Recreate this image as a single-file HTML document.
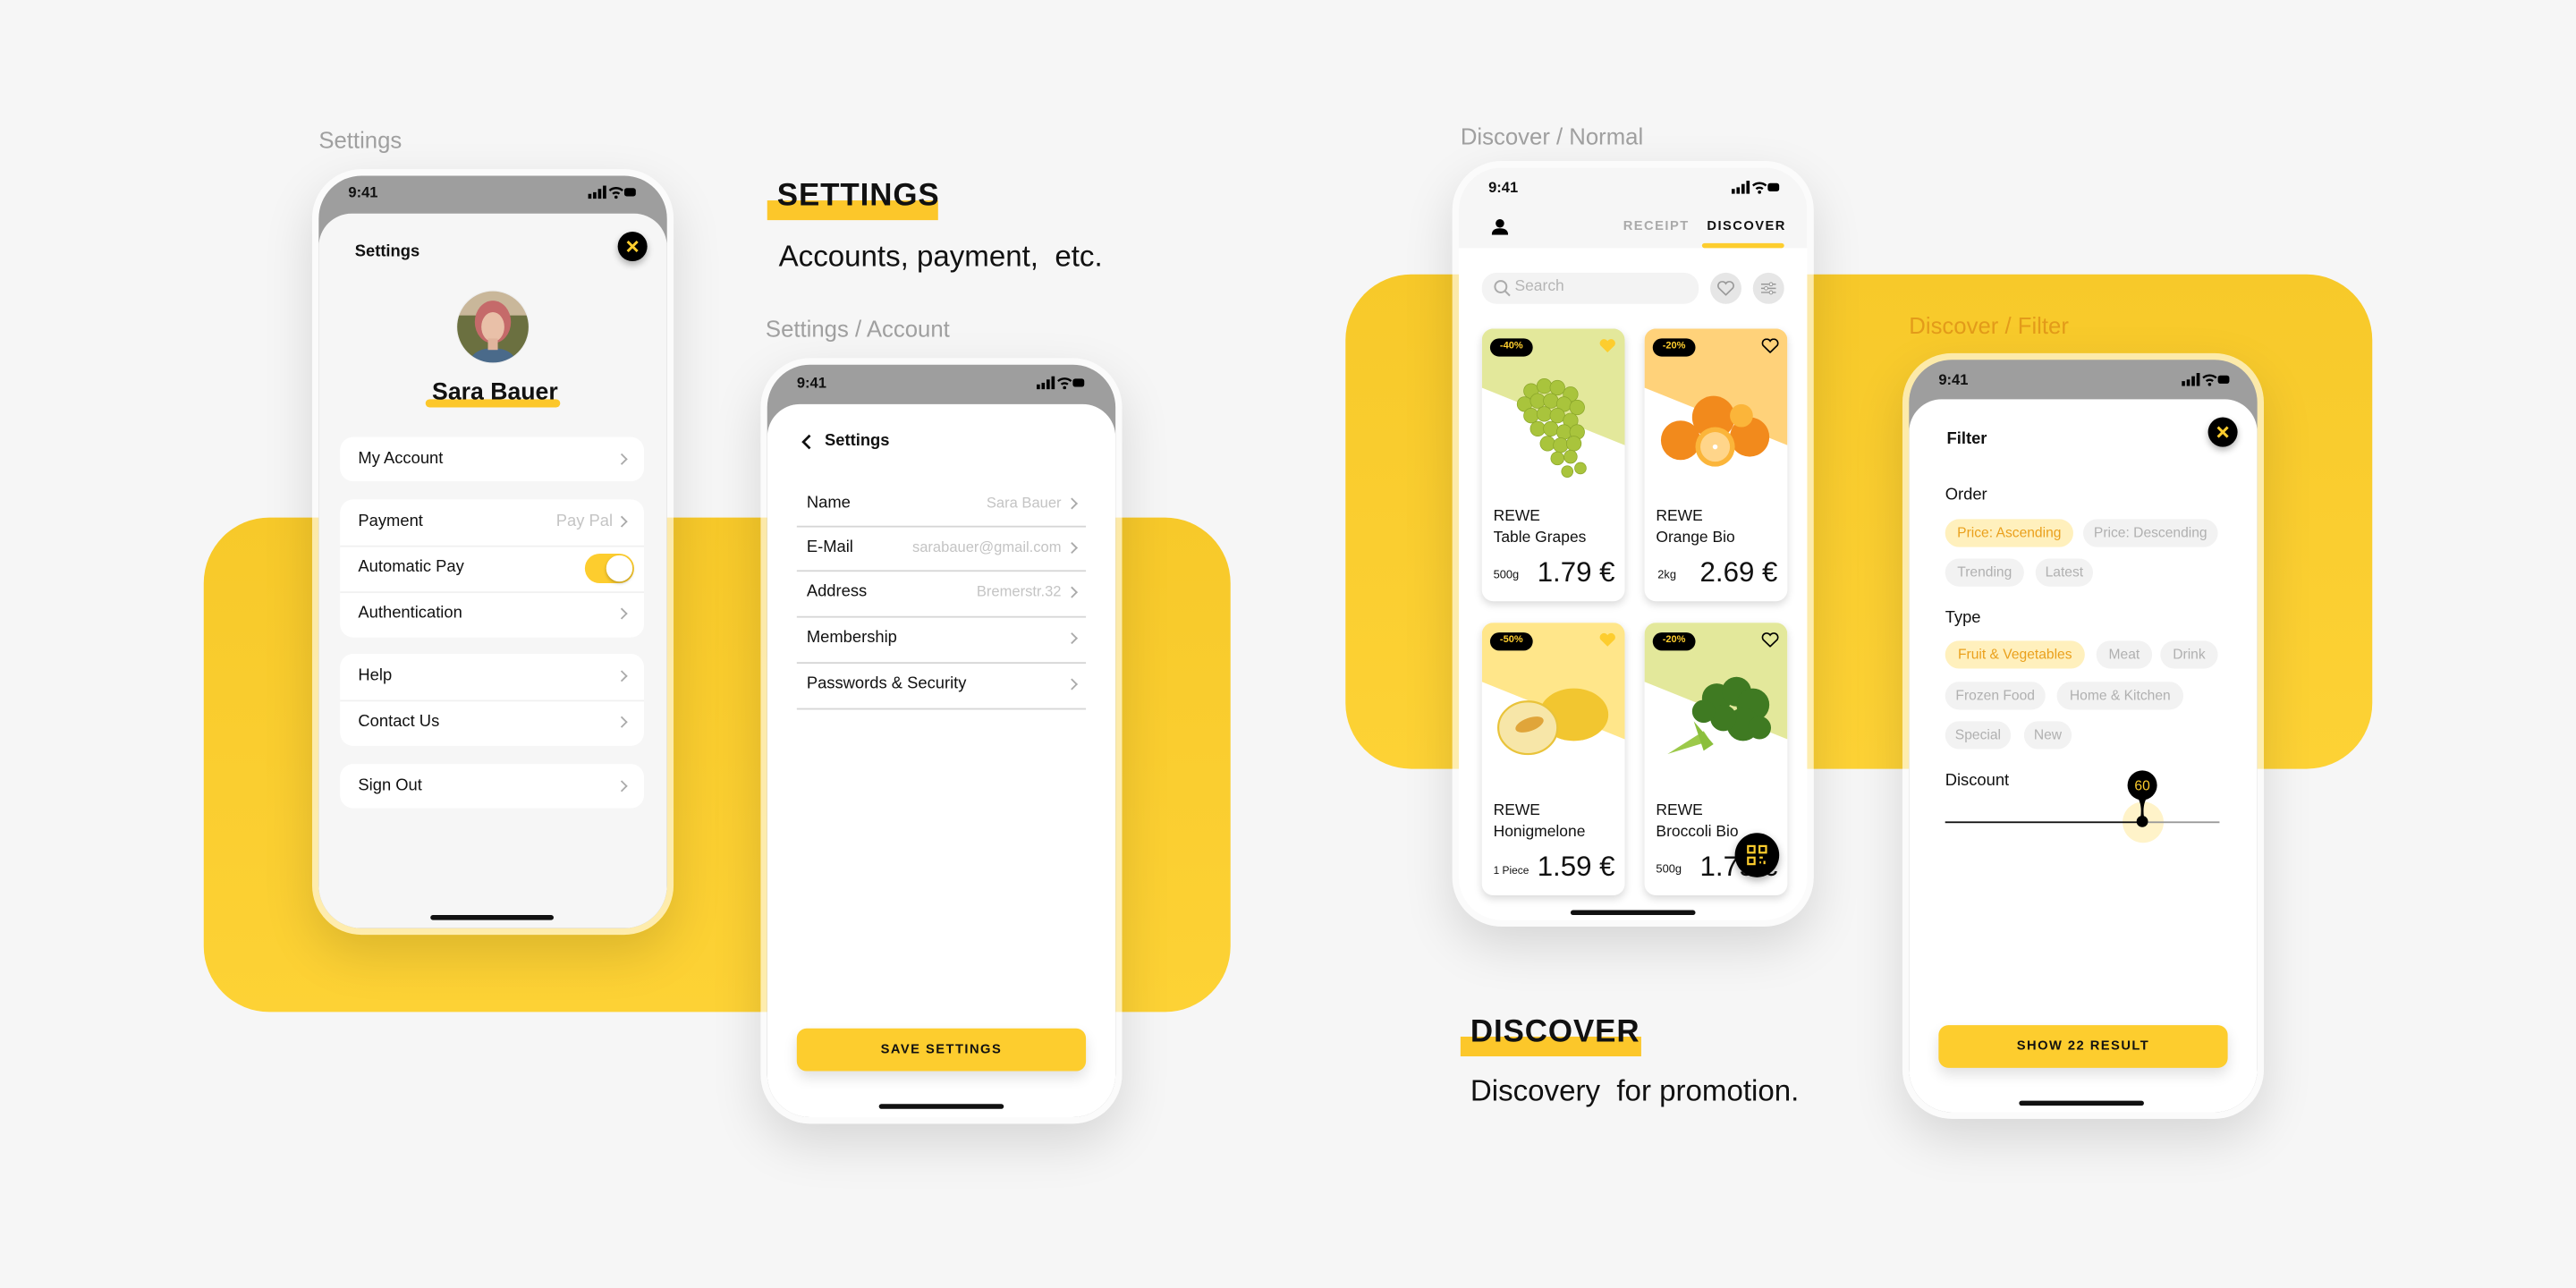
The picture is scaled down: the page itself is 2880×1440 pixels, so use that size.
<!DOCTYPE html>
<html><head><meta charset="utf-8"><style>
*{margin:0;padding:0;box-sizing:border-box}
html,body{width:2880px;height:1440px;overflow:hidden;background:#f6f6f6}
#w{position:absolute;left:0;top:0;width:1568px;height:784px;transform:scale(1.836735);transform-origin:0 0;font-family:"Liberation Sans",sans-serif;color:#111}
#w div,#w span,#w svg{position:absolute}
.lbl{font-size:14px;color:#a0a0a0;white-space:nowrap}
.yb{background:linear-gradient(180deg,#f7c92a,#fdd235);border-radius:40px}
.ph{width:220px;height:466px;border-radius:30px;background:rgba(255,255,255,.6);box-shadow:0 12px 30px rgba(0,0,0,.13)}
.sc{left:4px;top:4px;right:4px;bottom:4px;border-radius:26px;overflow:hidden;background:#9e9e9e}
.sheet{left:0;right:0;bottom:0;border-radius:20px 20px 0 0}
.t{white-space:nowrap;font-size:10px}
.b{font-weight:bold}
.st{font-size:9px;font-weight:bold}
.card{background:#fff;border-radius:8px}
.chev{width:5px;height:5px;border-right:1px solid #aaa;border-top:1px solid #aaa;transform:rotate(45deg)}
.hi{height:5px;background:#fcc72a;border-radius:3px}
.sep{height:1px;background:#d6d6d6}
.chip{height:17px;border-radius:9px;background:#f2f2f2;color:#b0b0b0;font-size:8.5px;line-height:17px;text-align:center;white-space:nowrap}
.chip.on{background:#fff0bd;color:#eaa01c}
.btn{background:#fdcd2e;border-radius:6px;box-shadow:0 4px 8px rgba(0,0,0,.12);font-size:8px;font-weight:bold;letter-spacing:.8px;text-align:center;line-height:26px}
.home{height:3px;background:#111;border-radius:2px}
.x{width:18px;height:18px;border-radius:50%;background:#000;box-shadow:0 2px 4px rgba(0,0,0,.3)}
.pc{width:87px;height:166px;border-radius:7px;overflow:hidden;background:#fff;box-shadow:0 2px 5px rgba(0,0,0,.15)}
.badge{left:5px;top:6px;width:26px;height:11px;border-radius:6px;background:#000;color:#fdcd2e;font-size:6px;font-weight:bold;text-align:center;line-height:11px}
</style></head><body><div id="w">

<div class="yb" style="left:124px;top:315px;width:625px;height:301px"></div>
<div class="yb" style="left:819px;top:167px;width:625px;height:301px"></div>

<div class="lbl" style="left:194px;top:77px">Settings</div>
<div class="lbl" style="left:466px;top:192px">Settings / Account</div>
<div class="lbl" style="left:889px;top:75px">Discover / Normal</div>
<div class="lbl" style="left:1162px;top:190px;color:#e39b1a">Discover / Filter</div>

<div style="left:467px;top:122px;width:104px;height:12px;background:#fcc72a"></div>
<div class="b" style="left:473px;top:109px;font-size:19px;letter-spacing:.5px">SETTINGS</div>
<div style="left:474px;top:146px;font-size:18px;white-space:pre">Accounts, payment,  etc.</div>
<div style="left:889px;top:631px;width:110px;height:12px;background:#fcc72a"></div>
<div class="b" style="left:895px;top:618px;font-size:19px;letter-spacing:.5px">DISCOVER</div>
<div style="left:895px;top:654px;font-size:18px;white-space:pre">Discovery  for promotion.</div>

<!-- PHONE 1 -->
<div class="ph" style="left:190px;top:103px"><div class="sc"><div class="sheet" style="top:23px;background:#f6f6f6"></div></div></div>
<div class="st" style="left:212px;top:112px">9:41</div>
<svg style="left:358px;top:113px" width="30" height="8" viewBox="0 0 30 8"><rect x="0" y="5" width="2" height="3"/><rect x="3" y="4" width="2" height="4"/><rect x="6" y="2" width="2" height="6"/><rect x="9" y="0" width="2" height="8"/><path d="M13 3a6 6 0 0 1 8 0M15 5a3 3 0 0 1 4 0" stroke="#000" fill="none" stroke-width="1.3"/><circle cx="17" cy="7" r="1"/><rect x="22" y="1.5" width="7" height="5" rx="1.5"/></svg>
<div class="t b" style="left:216px;top:148px">Settings</div>
<div class="x" style="left:376px;top:141px"></div>
<svg style="left:376px;top:141px" width="18" height="18"><path d="M6 6l6 6M12 6l-6 6" stroke="#fdcd2e" stroke-width="1.6"/></svg>
<svg style="left:277px;top:176px" width="46" height="46" viewBox="0 0 46 46"><defs><clipPath id="cc"><circle cx="23" cy="23" r="22"/></clipPath></defs><g clip-path="url(#cc)"><rect width="46" height="46" fill="#6b7040"/><rect y="0" width="46" height="16" fill="#c9b79a"/><path d="M8 46c2-8 8-10 15-10s13 2 15 10z" fill="#4a6a8a"/><ellipse cx="23" cy="20" rx="11" ry="13" fill="#c56a6a"/><ellipse cx="23" cy="23" rx="7" ry="9" fill="#e9c0a8"/><rect x="20" y="30" width="6" height="7" fill="#e0b49c"/></g><circle cx="23" cy="23" r="22" fill="none" stroke="#eee" stroke-width=".6"/></svg>
<div class="hi" style="left:259px;top:243px;width:82px"></div>
<div class="b" style="left:263px;top:231px;font-size:14.5px">Sara Bauer</div>
<div class="card" style="left:207px;top:266px;width:185px;height:27px"></div>
<div class="card" style="left:207px;top:304px;width:185px;height:84px"></div>
<div class="card" style="left:207px;top:398px;width:185px;height:56px"></div>
<div class="card" style="left:207px;top:465px;width:185px;height:27px"></div>
<div style="left:207px;top:332px;width:185px;height:1px;background:#f1f1f1"></div>
<div style="left:207px;top:360px;width:185px;height:1px;background:#f1f1f1"></div>
<div style="left:207px;top:426px;width:185px;height:1px;background:#f1f1f1"></div>
<div class="t" style="left:218px;top:274px">My Account</div>
<div class="t" style="left:218px;top:312px">Payment</div>
<div class="t" style="right:1195px;top:312px;color:#c4c4c4">Pay Pal</div>
<div class="t" style="left:218px;top:340px">Automatic Pay</div>
<div class="t" style="left:218px;top:368px">Authentication</div>
<div class="t" style="left:218px;top:406px">Help</div>
<div class="t" style="left:218px;top:434px">Contact Us</div>
<div class="t" style="left:218px;top:473px">Sign Out</div>
<div class="chev" style="left:376px;top:277px"></div>
<div class="chev" style="left:376px;top:315px"></div>
<div class="chev" style="left:376px;top:371px"></div>
<div class="chev" style="left:376px;top:409px"></div>
<div class="chev" style="left:376px;top:437px"></div>
<div class="chev" style="left:376px;top:476px"></div>
<div style="left:356px;top:337px;width:30px;height:18px;border-radius:9px;background:#fdcd2e"></div>
<div style="left:369px;top:338px;width:16px;height:16px;border-radius:50%;background:#fff;box-shadow:0 1px 2px rgba(0,0,0,.25)"></div>
<div class="home" style="left:262px;top:557px;width:75px"></div>

<!-- PHONE 2 -->
<div class="ph" style="left:463px;top:218px"><div class="sc"><div class="sheet" style="top:24px;background:#fff"></div></div></div>
<div class="st" style="left:485px;top:228px">9:41</div>
<svg style="left:631px;top:229px" width="30" height="8" viewBox="0 0 30 8"><rect x="0" y="5" width="2" height="3"/><rect x="3" y="4" width="2" height="4"/><rect x="6" y="2" width="2" height="6"/><rect x="9" y="0" width="2" height="8"/><path d="M13 3a6 6 0 0 1 8 0M15 5a3 3 0 0 1 4 0" stroke="#000" fill="none" stroke-width="1.3"/><circle cx="17" cy="7" r="1"/><rect x="22" y="1.5" width="7" height="5" rx="1.5"/></svg>
<svg style="left:487px;top:264px" width="8" height="10"><path d="M6 1L2 5l4 4" stroke="#111" stroke-width="1.5" fill="none"/></svg>
<div class="t b" style="left:502px;top:263px">Settings</div>
<div class="t" style="left:491px;top:301px">Name</div>
<div class="t" style="left:491px;top:328px">E-Mail</div>
<div class="t" style="left:491px;top:355px">Address</div>
<div class="t" style="left:491px;top:383px">Membership</div>
<div class="t" style="left:491px;top:411px">Passwords &amp; Security</div>
<div class="t" style="right:922px;top:301px;color:#c4c4c4;font-size:9px">Sara Bauer</div>
<div class="t" style="right:922px;top:328px;color:#c4c4c4;font-size:9px">sarabauer@gmail.com</div>
<div class="t" style="right:922px;top:355px;color:#c4c4c4;font-size:9px">Bremerstr.32</div>
<div class="chev" style="left:650px;top:304px"></div>
<div class="chev" style="left:650px;top:331px"></div>
<div class="chev" style="left:650px;top:358px"></div>
<div class="chev" style="left:650px;top:386px"></div>
<div class="chev" style="left:650px;top:414px"></div>
<div class="sep" style="left:485px;top:320px;width:176px"></div>
<div class="sep" style="left:485px;top:347px;width:176px"></div>
<div class="sep" style="left:485px;top:375px;width:176px"></div>
<div class="sep" style="left:485px;top:403px;width:176px"></div>
<div class="sep" style="left:485px;top:431px;width:176px"></div>
<div class="btn" style="left:485px;top:626px;width:176px;height:26px">SAVE SETTINGS</div>
<div class="home" style="left:535px;top:672px;width:76px"></div>

<!-- PHONE 3 -->
<div class="ph" style="left:884px;top:98px"><div class="sc" style="background:#fff"><div style="left:0;top:0;right:0;height:49px;background:#f6f6f6"></div></div></div>
<div class="st" style="left:906px;top:109px">9:41</div>
<svg style="left:1054px;top:110px" width="30" height="8" viewBox="0 0 30 8"><rect x="0" y="5" width="2" height="3"/><rect x="3" y="4" width="2" height="4"/><rect x="6" y="2" width="2" height="6"/><rect x="9" y="0" width="2" height="8"/><path d="M13 3a6 6 0 0 1 8 0M15 5a3 3 0 0 1 4 0" stroke="#000" fill="none" stroke-width="1.3"/><circle cx="17" cy="7" r="1"/><rect x="22" y="1.5" width="7" height="5" rx="1.5"/></svg>
<svg style="left:908px;top:133px" width="10" height="10"><circle cx="5" cy="3" r="2.6"/><path d="M0 10c0-3 2-4 5-4s5 1 5 4z"/></svg>
<div style="left:988px;top:133px;font-size:8px;letter-spacing:.8px;color:#aaa;font-weight:bold">RECEIPT</div>
<div style="left:1039px;top:133px;font-size:8px;letter-spacing:.8px;font-weight:bold">DISCOVER</div>
<div style="left:1036px;top:148px;width:50px;height:3px;background:#fdcd2e;border-radius:2px"></div>
<div style="left:902px;top:166px;width:132px;height:19px;border-radius:9px;background:#f3f3f3"></div>
<svg style="left:909px;top:170px" width="11" height="11"><circle cx="4.5" cy="4.5" r="3.5" stroke="#aaa" fill="none" stroke-width="1.1"/><path d="M7 7l3 3" stroke="#aaa" stroke-width="1.1"/></svg>
<div style="left:922px;top:169px;font-size:9.5px;color:#b5b5b5">Search</div>
<div style="left:1041px;top:166px;width:19px;height:19px;border-radius:50%;background:#e6e6e6"></div>
<div style="left:1067px;top:166px;width:19px;height:19px;border-radius:50%;background:#e6e6e6"></div>
<svg style="left:1045px;top:171px" width="11" height="9" viewBox="0 0 11 9"><path d="M5.5 8.5L1.2 4.3A2.3 2.3 0 0 1 5.5 1.6a2.3 2.3 0 0 1 4.3 2.7z" fill="none" stroke="#999" stroke-width=".9"/></svg>
<svg style="left:1071px;top:171px" width="11" height="9"><path d="M1 2h9M1 4.5h9M1 7h9" stroke="#999" stroke-width=".8"/><circle cx="7" cy="2" r="1" fill="#fff" stroke="#999" stroke-width=".6"/><circle cx="4" cy="4.5" r="1" fill="#fff" stroke="#999" stroke-width=".6"/><circle cx="7" cy="7" r="1" fill="#fff" stroke="#999" stroke-width=".6"/></svg>

<div class="pc" style="left:902px;top:200px">
 <svg style="left:0;top:0" width="87" height="100"><path d="M0 0H87V71L0 36z" fill="#e3e89b"/>
 <g fill="#a9c43c" stroke="#8aa62a" stroke-width=".4"><circle cx="30" cy="38" r="4.5"/><circle cx="38" cy="35" r="4.5"/><circle cx="46" cy="36" r="4.5"/><circle cx="54" cy="40" r="4.5"/><circle cx="26" cy="46" r="4.5"/><circle cx="34" cy="44" r="4.5"/><circle cx="42" cy="44" r="4.5"/><circle cx="50" cy="46" r="4.5"/><circle cx="58" cy="48" r="4.5"/><circle cx="30" cy="53" r="4.5"/><circle cx="38" cy="52" r="4.5"/><circle cx="46" cy="53" r="4.5"/><circle cx="54" cy="56" r="4.5"/><circle cx="34" cy="61" r="4.5"/><circle cx="42" cy="61" r="4.5"/><circle cx="50" cy="63" r="4.5"/><circle cx="58" cy="63" r="4.5"/><circle cx="40" cy="70" r="4.5"/><circle cx="48" cy="71" r="4.5"/><circle cx="56" cy="70" r="4.5"/><circle cx="46" cy="79" r="4"/><circle cx="54" cy="78" r="4"/><circle cx="60" cy="85" r="3.5"/><circle cx="52" cy="87" r="3.5"/></g></svg>
 <div class="badge">-40%</div>
 <svg style="left:71px;top:6px" width="11" height="9" viewBox="0 0 11 9"><path d="M5.5 8.5L1.2 4.3A2.3 2.3 0 0 1 5.5 1.6a2.3 2.3 0 0 1 4.3 2.7z" fill="#fdcd2e"/></svg>
 <div style="left:7px;top:108px;font-size:9.5px;line-height:13px">REWE<br>Table Grapes</div>
 <div style="left:7px;top:147px;font-size:7px">500g</div>
 <div style="right:6px;top:139px;font-size:17px">1.79 €</div>
</div>
<div class="pc" style="left:1001px;top:200px">
 <svg style="left:0;top:0" width="87" height="90"><path d="M0 0H87V71L0 36z" fill="#ffd27a"/>
 <circle cx="42" cy="54" r="13" fill="#f28a1c"/><circle cx="22" cy="68" r="12" fill="#f28a1c"/><circle cx="64" cy="66" r="12" fill="#f28a1c"/><circle cx="59" cy="53" r="7" fill="#fbb53a"/><circle cx="43" cy="72" r="12" fill="#fbb53a"/><circle cx="43" cy="72" r="9" fill="#ffd58a"/><circle cx="43" cy="72" r="1.5" fill="#fff"/></svg>
 <div class="badge">-20%</div>
 <svg style="left:71px;top:6px" width="11" height="9" viewBox="0 0 11 9"><path d="M5.5 8.5L1.2 4.3A2.3 2.3 0 0 1 5.5 1.6a2.3 2.3 0 0 1 4.3 2.7z" fill="none" stroke="#000" stroke-width=".9"/></svg>
 <div style="left:7px;top:108px;font-size:9.5px;line-height:13px">REWE<br>Orange Bio</div>
 <div style="left:8px;top:147px;font-size:7px">2kg</div>
 <div style="right:6px;top:139px;font-size:17px">2.69 €</div>
</div>
<div class="pc" style="left:902px;top:379px">
 <svg style="left:0;top:0" width="87" height="90"><path d="M0 0H87V71L0 36z" fill="#ffe68a"/>
 <ellipse cx="56" cy="56" rx="21" ry="16" fill="#f2c630"/><ellipse cx="28" cy="64" rx="18" ry="16" fill="#f7e6a8" stroke="#e9c33a" stroke-width="1.2"/><ellipse cx="29" cy="62" rx="9" ry="4" fill="#e0a53a" transform="rotate(-20 29 62)"/></svg>
 <div class="badge">-50%</div>
 <svg style="left:71px;top:6px" width="11" height="9" viewBox="0 0 11 9"><path d="M5.5 8.5L1.2 4.3A2.3 2.3 0 0 1 5.5 1.6a2.3 2.3 0 0 1 4.3 2.7z" fill="#fdcd2e"/></svg>
 <div style="left:7px;top:108px;font-size:9.5px;line-height:13px">REWE<br>Honigmelone</div>
 <div style="left:7px;top:148px;font-size:6.5px">1 Piece</div>
 <div style="right:6px;top:139px;font-size:17px">1.59 €</div>
</div>
<div class="pc" style="left:1001px;top:379px">
 <svg style="left:0;top:0" width="87" height="90"><path d="M0 0H87V71L0 36z" fill="#e3e89b"/>
 <path d="M14 80l22-14 4 6z" fill="#9cc94a"/><path d="M30 60l12 14-6 4z" fill="#8bbf3c"/>
 <g fill="#3f7a22"><circle cx="44" cy="46" r="9"/><circle cx="56" cy="42" r="9"/><circle cx="66" cy="50" r="10"/><circle cx="60" cy="62" r="10"/><circle cx="48" cy="58" r="8"/><circle cx="36" cy="54" r="7"/><circle cx="70" cy="64" r="7"/></g></svg>
 <div class="badge">-20%</div>
 <svg style="left:71px;top:6px" width="11" height="9" viewBox="0 0 11 9"><path d="M5.5 8.5L1.2 4.3A2.3 2.3 0 0 1 5.5 1.6a2.3 2.3 0 0 1 4.3 2.7z" fill="none" stroke="#000" stroke-width=".9"/></svg>
 <div style="left:7px;top:108px;font-size:9.5px;line-height:13px">REWE<br>Broccoli Bio</div>
 <div style="left:7px;top:147px;font-size:7px">500g</div>
 <div style="right:6px;top:139px;font-size:17px">1.79 €</div>
</div>
<div style="left:1056px;top:507px;width:27px;height:27px;border-radius:50%;background:#000;box-shadow:0 2px 5px rgba(0,0,0,.3)"></div>
<svg style="left:1063px;top:514px" width="13" height="13" viewBox="0 0 13 13" fill="none" stroke="#fdcd2e" stroke-width="1.2"><rect x="1" y="1" width="4" height="4"/><rect x="8" y="1" width="4" height="4"/><rect x="1" y="8" width="4" height="4"/><path d="M8 8h2M11 10v2M8 11h1"/></svg>
<div class="home" style="left:956px;top:554px;width:76px"></div>

<!-- PHONE 4 -->
<div class="ph" style="left:1158px;top:215px"><div class="sc"><div class="sheet" style="top:24px;background:#fff"></div></div></div>
<div class="st" style="left:1180px;top:226px">9:41</div>
<svg style="left:1328px;top:227px" width="30" height="8" viewBox="0 0 30 8"><rect x="0" y="5" width="2" height="3"/><rect x="3" y="4" width="2" height="4"/><rect x="6" y="2" width="2" height="6"/><rect x="9" y="0" width="2" height="8"/><path d="M13 3a6 6 0 0 1 8 0M15 5a3 3 0 0 1 4 0" stroke="#000" fill="none" stroke-width="1.3"/><circle cx="17" cy="7" r="1"/><rect x="22" y="1.5" width="7" height="5" rx="1.5"/></svg>
<div class="t b" style="left:1185px;top:262px">Filter</div>
<div class="x" style="left:1344px;top:254px"></div>
<svg style="left:1344px;top:254px" width="18" height="18"><path d="M6 6l6 6M12 6l-6 6" stroke="#fdcd2e" stroke-width="1.6"/></svg>
<div class="t" style="left:1184px;top:296px">Order</div>
<div class="chip on" style="left:1184px;top:316px;width:78px">Price: Ascending</div>
<div class="chip" style="left:1268px;top:316px;width:82px">Price: Descending</div>
<div class="chip" style="left:1184px;top:340px;width:48px">Trending</div>
<div class="chip" style="left:1239px;top:340px;width:35px">Latest</div>
<div class="t" style="left:1184px;top:371px">Type</div>
<div class="chip on" style="left:1184px;top:390px;width:85px">Fruit &amp; Vegetables</div>
<div class="chip" style="left:1276px;top:390px;width:34px">Meat</div>
<div class="chip" style="left:1315px;top:390px;width:35px">Drink</div>
<div class="chip" style="left:1184px;top:415px;width:61px">Frozen Food</div>
<div class="chip" style="left:1252px;top:415px;width:77px">Home &amp; Kitchen</div>
<div class="chip" style="left:1184px;top:439px;width:40px">Special</div>
<div class="chip" style="left:1232px;top:439px;width:29px">New</div>
<div class="t" style="left:1184px;top:470px">Discount</div>
<div style="left:1292px;top:488px;width:25px;height:25px;border-radius:50%;background:#fff3c9"></div>
<div style="left:1184px;top:500px;width:120px;height:1px;background:#111"></div>
<div style="left:1304px;top:500px;width:47px;height:1px;background:#999"></div>
<svg style="left:1294px;top:468px" width="20" height="38" viewBox="0 0 20 38"><circle cx="10" cy="10" r="9"/><path d="M7 17q3 5 2 12h2q-1-7 2-12z"/><circle cx="10" cy="32" r="3.5"/></svg>
<div style="left:1294px;top:473px;width:20px;text-align:center;font-size:8.5px;color:#fdcd2e">60</div>
<div class="btn" style="left:1180px;top:624px;width:176px;height:26px">SHOW 22 RESULT</div>
<div class="home" style="left:1229px;top:670px;width:76px"></div>

</div></body></html>
